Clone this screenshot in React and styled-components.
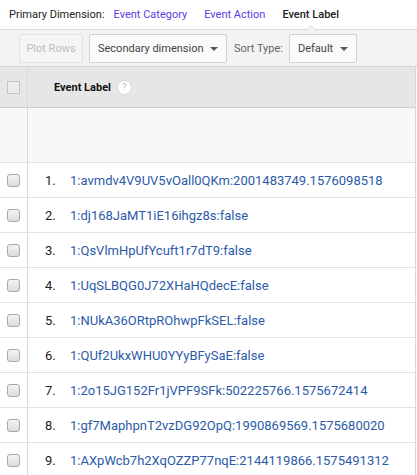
import styled, { createGlobalStyle } from "styled-components";

const GlobalStyle = createGlobalStyle`
  body {
    margin: 0;
    background: #fff;
    font-family: Roboto, "Liberation Sans", Arial, sans-serif;
    color: #222;
  }
`;

const Page = styled.div`
  width: 417px;
  overflow: hidden;
`;

const DimensionBar = styled.div`
  height: 29px;
  display: flex;
  align-items: center;
  padding-left: 9px;
  font-size: 11px;
  gap: 17px;
`;

const DimLabel = styled.span`
  color: #222;
  margin-right: -8px;
`;

const DimLink = styled.span`
  position: relative;
  color: ${(p) => (p.$active ? "#222" : "#6139e6")};
  font-weight: ${(p) => (p.$active ? 500 : 400)};

  ${(p) =>
    p.$active &&
    `
    &::before, &::after {
      content: "";
      position: absolute;
      left: 50%;
      margin-left: -6px;
      width: 0;
      height: 0;
      border-left: 6px solid transparent;
      border-right: 6px solid transparent;
    }
    &::before {
      bottom: -10px;
      border-bottom: 6px solid #dcdcdc;
    }
    &::after {
      bottom: -11px;
      border-bottom: 6px solid #f3f3f3;
    }
  `}
`;

const Toolbar = styled.div`
  background: #f3f3f3;
  border-top: 1px solid #dcdcdc;
  border-bottom: 1px solid #d4d4d4;
  height: 38px;
  padding: 4px 0 0 19px;
  box-sizing: border-box;
  display: flex;
  align-items: flex-start;
  gap: 6px;
  font-size: 11px;
`;

const Button = styled.div`
  width: ${(p) => p.$w}px;
  height: 29px;
  box-sizing: border-box;
  border: 1px solid ${(p) => (p.$disabled ? "#e2e2e2" : "#d0d0d0")};
  border-radius: 2px;
  background: ${(p) => (p.$disabled ? "#f5f5f5" : "#fafafa")};
  color: ${(p) => (p.$disabled ? "#bdbdbd" : "#444")};
  display: flex;
  align-items: center;
  justify-content: ${(p) => (p.$disabled ? "center" : "space-between")};
  padding: 0 8px;
  white-space: nowrap;
`;

const Caret = styled.span`
  width: 0;
  height: 0;
  border-left: 4px solid transparent;
  border-right: 4px solid transparent;
  border-top: 4px solid #555;
`;

const ToolLabel = styled.span`
  color: #666;
  line-height: 29px;
  white-space: nowrap;
  margin-left: 1px;
`;

const Table = styled.div`
  width: 416px;
  box-sizing: border-box;
  border-right: 1px solid #d8d8d8;
`;

const Row = styled.div`
  display: grid;
  grid-template-columns: 28px 1fr;
  height: ${(p) => p.$h}px;
  background: ${(p) => p.$bg || "#fff"};
  border-bottom: 1px solid ${(p) => p.$line || "#e2e2e2"};
`;

const CheckCell = styled.div`
  border-right: 1px solid #dadada;
  display: flex;
  align-items: center;
  justify-content: center;
  padding-right: 1px;
`;

const HeaderBox = styled.span`
  width: 13px;
  height: 13px;
  box-sizing: border-box;
  border: 1px solid #c4c4c4;
  background: #ececec;
`;

const RowBox = styled.span`
  width: 13px;
  height: 13px;
  box-sizing: border-box;
  border: 1px solid #a9a9a9;
  border-radius: 3px;
  background: linear-gradient(#f4f4f4, #dcdcdc);
`;

const HeaderCell = styled.div`
  display: flex;
  align-items: center;
  padding-left: 26px;
  font-size: 11px;
  font-weight: 700;
  color: #111;
  gap: 6px;
`;

const Help = styled.span`
  width: 13px;
  height: 13px;
  border-radius: 50%;
  background: #fff;
  border: 1px solid #d6d6d6;
  color: #bbb;
  font-size: 9px;
  font-weight: 400;
  display: flex;
  align-items: center;
  justify-content: center;
`;

const DataCell = styled.div`
  display: flex;
  align-items: center;
  padding-left: 17px;
  font-size: 13px;
`;

const Num = styled.span`
  width: 25px;
  color: #222;
`;

const Label = styled.span`
  color: #2b5ba8;
  white-space: nowrap;
`;

const rows = [
  "1:avmdv4V9UV5vOall0QKm:2001483749.1576098518",
  "1:dj168JaMT1iE16ihgz8s:false",
  "1:QsVlmHpUfYcuft1r7dT9:false",
  "1:UqSLBQG0J72XHaHQdecE:false",
  "1:NUkA36ORtpROhwpFkSEL:false",
  "1:QUf2UkxWHU0YYyBFySaE:false",
  "1:2o15JG152Fr1jVPF9SFk:502225766.1575672414",
  "1:gf7MaphpnT2vzDG92OpQ:1990869569.1575680020",
  "1:AXpWcb7h2XqOZZP77nqE:2144119866.1575491312",
];

export default function App() {
  return (
    <Page>
      <GlobalStyle />
      <DimensionBar>
        <DimLabel>Primary Dimension:</DimLabel>
        <DimLink>Event Category</DimLink>
        <DimLink>Event Action</DimLink>
        <DimLink $active>Event Label</DimLink>
      </DimensionBar>
      <Toolbar>
        <Button $disabled $w={64}>
          Plot Rows
        </Button>
        <Button $w={138}>
          Secondary dimension <Caret />
        </Button>
        <ToolLabel>Sort Type:</ToolLabel>
        <Button $w={68}>
          Default <Caret />
        </Button>
      </Toolbar>
      <Table>
        <Row $h={40} $bg="#e6e6e6" $line="#cfcfcf">
          <CheckCell>
            <HeaderBox />
          </CheckCell>
          <HeaderCell>
            Event Label <Help>?</Help>
          </HeaderCell>
        </Row>
        <Row $h={54} $bg="#f8f8f8">
          <CheckCell />
          <div />
        </Row>
        {rows.map((r, i) => (
          <Row key={r} $h={34}>
            <CheckCell>
              <RowBox />
            </CheckCell>
            <DataCell>
              <Num>{i + 1}.</Num>
              <Label>{r}</Label>
            </DataCell>
          </Row>
        ))}
      </Table>
    </Page>
  );
}
